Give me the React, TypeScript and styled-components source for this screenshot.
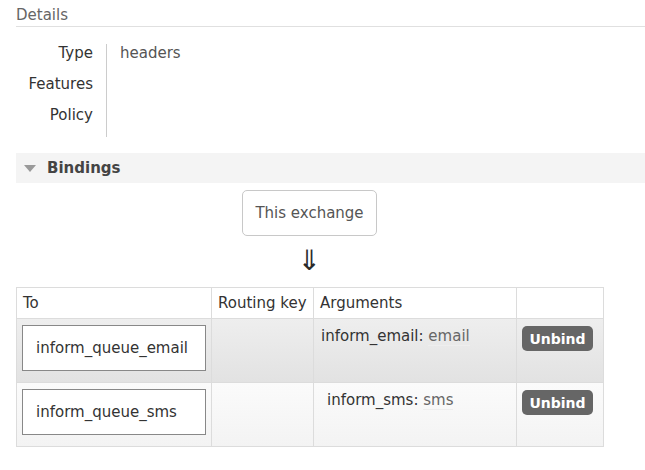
import React from 'react';
import styled, { createGlobalStyle } from 'styled-components';

const GlobalStyle = createGlobalStyle`
  html, body { margin: 0; padding: 0; background: #fff; }
  body {
    font-family: 'DejaVu Sans', Verdana, sans-serif;
    font-size: 15px;
    color: #484848;
  }
`;

const Page = styled.div`
  padding: 0 0 0 16px;
`;

const SectionTitle = styled.div`
  padding-top: 6px;
  height: 20px;
  line-height: 18px;
  color: #666;
  font-size: 15px;
  border-bottom: 1px solid #e0e0e0;
`;

const Facts = styled.table`
  border-collapse: collapse;
  margin-top: 17px;
`;

const FactLabel = styled.th`
  width: 65px;
  padding: 0 13px 13px 12px;
  text-align: right;
  font-weight: normal;
  color: #333;
  line-height: 18px;
  vertical-align: top;
  border-right: 1px solid #ccc;
`;

const FactValue = styled.td`
  padding: 0 14px 13px 13px;
  line-height: 18px;
  color: #555;
  vertical-align: top;
`;

const Bar = styled.div`
  margin-top: 16px;
  height: 30px;
  display: flex;
  align-items: center;
  gap: 11px;
  padding-left: 8px;
  background: #f4f4f4;
`;

const Triangle = styled.span`
  width: 0;
  height: 0;
  border-left: 6px solid transparent;
  border-right: 6px solid transparent;
  border-top: 7px solid #9a9a9a;
  margin-top: 1px;
`;

const BarTitle = styled.span`
  font-weight: bold;
  font-size: 15px;
  color: #444;
`;

const Bindings = styled.div`
  width: 587px;
  display: flex;
  flex-direction: column;
  align-items: center;
`;

const ExchangeBox = styled.div`
  margin-top: 7px;
  width: 133px;
  height: 44px;
  border: 1px solid #c8c8c8;
  border-radius: 5px;
  display: flex;
  align-items: center;
  justify-content: center;
  color: #555;
`;

const Arrow = styled.div`
  margin-top: 9px;
  height: 32px;
  font-size: 28px;
  line-height: 32px;
  color: #2a2a2a;
`;

const List = styled.table`
  margin-top: 10px;
  width: 587px;
  border-collapse: collapse;
  table-layout: fixed;
`;

const Head = styled.th<{ w: number }>`
  box-sizing: border-box;
  width: ${({ w }) => w}px;
  height: 31px;
  padding: 0 6px;
  text-align: left;
  font-weight: normal;
  color: #333;
  border: 1px solid #dcdcdc;
`;

const Row = styled.tr<{ alt?: boolean }>`
  height: 64px;
  background: ${({ alt }) =>
    alt ? 'linear-gradient(#fbfbfb, #f3f3f3)' : 'linear-gradient(#eeeeee, #e2e2e2)'};
`;

const Cell = styled.td`
  box-sizing: border-box;
  padding: 6px 5px;
  vertical-align: top;
  border: 1px solid #dcdcdc;
`;

const QueueBox = styled.div`
  width: 182px;
  height: 44px;
  border: 1px solid #888;
  background: #fff;
  display: flex;
  align-items: center;
  color: #333;
  & span { padding-left: 13px; }
`;

const Arg = styled.div<{ shift: number }>`
  padding-top: 2px;
  padding-left: ${({ shift }) => shift}px;
  line-height: 18px;
  color: #333;
`;

const ArgValue = styled.span`
  color: #666;
  border-bottom: 1px solid #eee;
`;

const UnbindButton = styled.button`
  margin-top: 1px;
  width: 71px;
  height: 25px;
  border: none;
  border-radius: 5px;
  background: #666;
  color: #fff;
  font-family: inherit;
  font-size: 14px;
  font-weight: bold;
  padding: 0;
`;

const bindings = [
  { queue: 'inform_queue_email', key: 'inform_email', value: 'email', alt: false, shift: 2 },
  { queue: 'inform_queue_sms', key: 'inform_sms', value: 'sms', alt: true, shift: 8 },
];

export default function App() {
  return (
    <Page>
      <GlobalStyle />
      <SectionTitle>Details</SectionTitle>
      <Facts>
        <tbody>
          <tr><FactLabel>Type</FactLabel><FactValue>headers</FactValue></tr>
          <tr><FactLabel>Features</FactLabel><FactValue /></tr>
          <tr><FactLabel>Policy</FactLabel><FactValue /></tr>
        </tbody>
      </Facts>
      <Bar>
        <Triangle />
        <BarTitle>Bindings</BarTitle>
      </Bar>
      <Bindings>
        <ExchangeBox>This exchange</ExchangeBox>
        <Arrow>⇓</Arrow>
      </Bindings>
      <List>
        <thead>
          <tr>
            <Head w={195}>To</Head>
            <Head w={102}>Routing key</Head>
            <Head w={203}>Arguments</Head>
            <Head w={87}></Head>
          </tr>
        </thead>
        <tbody>
          {bindings.map((b) => (
            <Row key={b.queue} alt={b.alt}>
              <Cell><QueueBox><span>{b.queue}</span></QueueBox></Cell>
              <Cell></Cell>
              <Cell>
                <Arg shift={b.shift}>{b.key}: <ArgValue>{b.value}</ArgValue></Arg>
              </Cell>
              <Cell><UnbindButton>Unbind</UnbindButton></Cell>
            </Row>
          ))}
        </tbody>
      </List>
    </Page>
  );
}
